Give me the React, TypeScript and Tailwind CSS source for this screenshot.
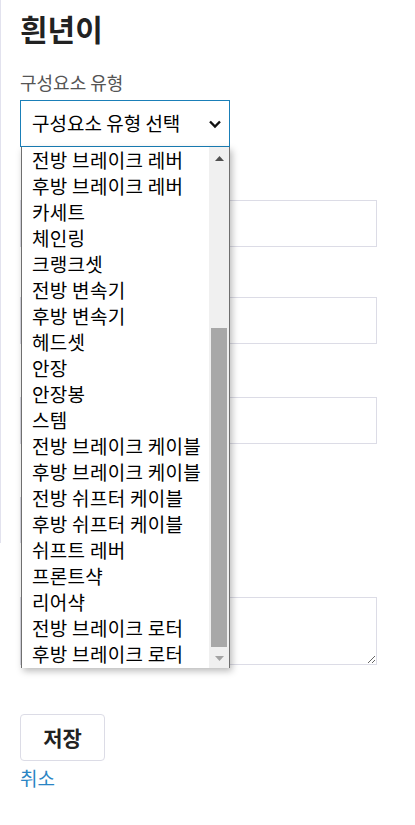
import React from 'react'

const parts = [
	'전방 브레이크 레버',
	'후방 브레이크 레버',
	'카세트',
	'체인링',
	'크랭크셋',
	'전방 변속기',
	'후방 변속기',
	'헤드셋',
	'안장',
	'안장봉',
	'스템',
	'전방 브레이크 케이블',
	'후방 브레이크 케이블',
	'전방 쉬프터 케이블',
	'후방 쉬프터 케이블',
	'쉬프트 레버',
	'프론트샥',
	'리어샥',
	'전방 브레이크 로터',
	'후방 브레이크 로터',
]

const font = { fontFamily: '"Noto Sans CJK KR", "Noto Sans", sans-serif' }

// 드롭다운 아래에 가려진 입력칸 (라벨은 가려져 보이지 않음)
function Field({ className }: { className: string }) {
	return <div className={`h-[47px] w-[357px] border border-[#dcdce6] bg-white ${className}`} />
}

function PartDropdown() {
	return (
		<div className="absolute left-[1px] top-[47px] z-10 flex h-[521px] w-[209px] border-x border-[#6f6f6f] bg-white shadow-[2px_3px_7px_rgba(0,0,0,0.28)]">
			<ul className="flex-1 overflow-hidden">
				{parts.map((p) => (
					<li key={p} className="h-[26px] pl-[10px] text-[19px] leading-[26px] tracking-[0.3px] text-black whitespace-nowrap">
						{p}
					</li>
				))}
			</ul>
			<div className="flex w-[20px] flex-col bg-[#f0f0f0]">
				<div className="flex h-[22px] items-center justify-center">
					<svg width="9" height="5" viewBox="0 0 9 5"><path d="M0 5 L4.5 0 L9 5 Z" fill="#505050" /></svg>
				</div>
				<div className="flex-1 pt-[159px] pb-[1px]">
					<div className="mx-[2px] h-full bg-[#a8a8a8]" />
				</div>
				<div className="flex h-[20px] items-center justify-center">
					<svg width="9" height="5" viewBox="0 0 9 5"><path d="M0 0 L4.5 5 L9 0 Z" fill="#a3a3a3" /></svg>
				</div>
			</div>
		</div>
	)
}

export default function App() {
	return (
		<div className="min-h-[825px] bg-white" style={font}>
			<div className="border-l border-[#e2e2ee] pl-[19px]">
				<h1 className="pt-[8px] text-[30px] font-bold leading-[40px] text-[#222]">흰년이</h1>
				<div className="mt-[22px] h-[24px] text-[18px] leading-[24px] text-[#555]">구성요소 유형</div>
				<div className="relative mt-[6px]">
					<div className="flex h-[47px] w-[210px] items-center justify-between border border-[#1a7fb8] bg-white pl-[11px] pr-[7px] text-[19px] text-black">
						<span>구성요소 유형 선택</span>
						<svg width="14" height="10" viewBox="0 0 14 10">
							<polyline points="2,2.5 7,7.5 12,2.5" fill="none" stroke="#111" strokeWidth="2.4" />
						</svg>
					</div>
					<PartDropdown />
				</div>
				<Field className="mt-[53px]" />
				<Field className="mt-[50px]" />
				<Field className="mt-[53px]" />
				<div className="mt-[53px] h-[46px] w-[210px] border border-[#dcdce6]" />
			</div>
			<div className="pl-[20px]">
				<textarea className="mt-[54px] block h-[68px] w-[357px] border border-[#dcdce6] bg-white outline-none" />
				<button className="mt-[49px] h-[47px] w-[85px] rounded-[4px] border border-[#dcdce6] bg-white text-[21px] font-bold text-[#222]">
					저장
				</button>
				<div className="mt-[4px] text-[19px] leading-[26px] text-[#2a85c4]">취소</div>
			</div>
		</div>
	)
}
